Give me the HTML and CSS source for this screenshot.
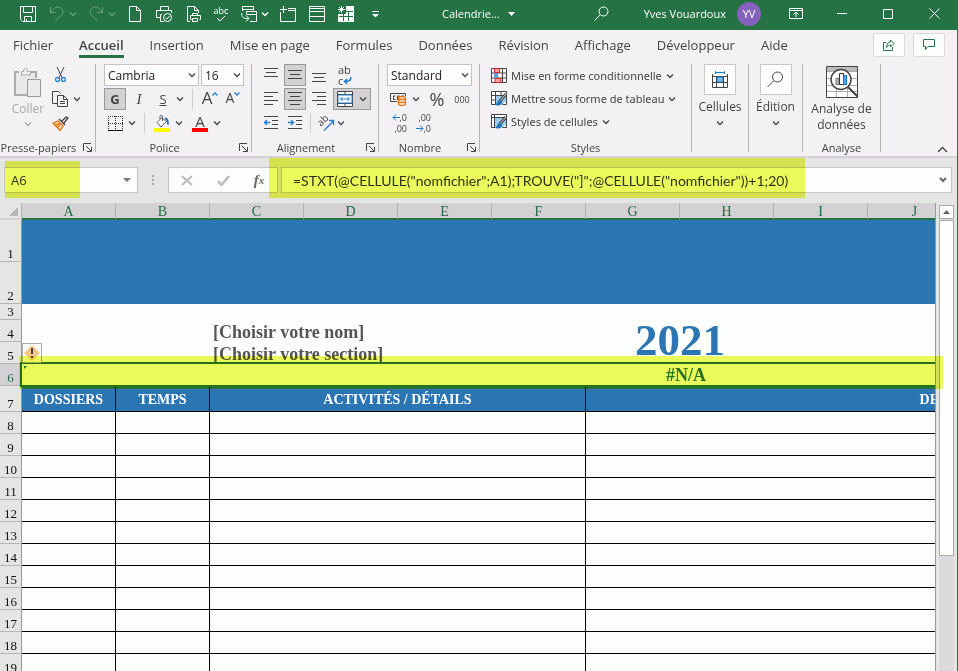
FILE: index.html
```html
<!DOCTYPE html>
<html lang="fr">
<head>
  <meta charset="UTF-8" />
  <meta name="viewport" content="width=device-width, initial-scale=1.0"/>
  <title>Calendrier</title>
  <link rel="stylesheet" href="styles.css">
</head>
<body>
  <svg class="defs" aria-hidden="true">
    <symbol id="chev" viewBox="0 0 8 8"><path d="M1 2.500l3 3 3-3" fill="none" stroke="currentColor" stroke-width="1.300"/></symbol>
    <symbol id="launch" viewBox="0 0 9 9"><path d="M.5 8V.5H8M3 3l5 5M8.500 4v4.500H4" fill="none" stroke="#444"/></symbol>
  </svg>

  <header class="titlebar">
    <div class="quick">
      <button aria-label="Enregistrer"><svg width="16" height="16"><path d="M.5.500h15v15h-13l-2-2zM3.500.500v6h9v-6M4.500 15.500v-5h7v5M6.500 13v2.500"/></svg></button>
      <button class="dim" aria-label="Annuler"><svg width="16" height="16"><path d="M1.500 1v5.500H7M1.500 6.500C5 1 9 0 12 2c3 2.500 2 5.500 0 7.500l-6 6"/></svg></button>
      <button class="dim more" aria-label="Options d'annulation"><svg width="8" height="8"><use href="#chev"/></svg></button>
      <button class="dim" aria-label="Rétablir"><svg width="16" height="16"><path d="M14.500 1v5.500H9M14.500 6.500C11 1 7 0 4 2c-3 2.500-2 5.500 0 7.500l6 6"/></svg></button>
      <button class="dim more" aria-label="Options de rétablissement"><svg width="8" height="8"><use href="#chev"/></svg></button>
      <button aria-label="Nouveau"><svg width="16" height="16"><path d="M2.500.500h7l4 4v11h-11zM9.500.500v4h4"/></svg></button>
      <button aria-label="Impression rapide"><svg width="16" height="16"><path d="M4.500 4.500v-4h8v4M4 11.500H.5v-7h15V7M6 8.500H4.500v7H8"/><circle cx="11.500" cy="11.500" r="4"/><path d="M9.500 11.500l1.500 1.500 2.500-3"/></svg></button>
      <button aria-label="Aperçu avant impression"><svg width="16" height="16"><path d="M5 15.500H2.500V.5h7l4 4V7M9.500.500v4h4M7.500 9.500v-2h5v2M6.500 13.500h-1v-4h10v4h-1M7.500 12.500h5v3h-5z"/></svg></button>
      <button class="abc" aria-label="Orthographe">abc<svg width="10" height="6"><path d="M1 2l3 3 5-5"/></svg></button>
      <button aria-label="Calculer"><svg width="16" height="16"><path d="M1.500 5V.5h11v4M1.500 3.500h11M9 15.500h6.500v-10h-10V8M5.500 8.500h10M1 7C0 11 3 13 7.500 12.500M5 9.500l3 3-3 3"/></svg></button>
      <button class="more" aria-label="Options de calcul"><svg width="8" height="8"><use href="#chev"/></svg></button>
      <button aria-label="Insérer"><svg width="16" height="16"><path d="M8 2.500h7.500v13H.5V6M8 4.500h7.500M3.500 0v7M0 3.500h7"/></svg></button>
      <button aria-label="Lignes"><svg width="16" height="16"><path d="M.5.500h15v15H.5zM.5 5.500h15M.5 10.500h15M.5 2.500h15"/></svg></button>
      <button aria-label="Figer les volets"><svg width="16" height="16"><path d="M8 0h8v16H0V8h8z" fill="#fff" stroke="none"/><path d="M3.500 0v7M0 3.500h7M1 1l5 5M6 1L1 6"/><path d="M5.500 6v9M10.500 5v10M5 5.500h10M1 10.500h14" stroke="#257345"/></svg></button>
      <button aria-label="Personnaliser"><svg width="16" height="16"><path d="M5 5.500h7"/><path d="M5 8h7l-3.500 3.500z" fill="#fff" stroke="none"/></svg></button>
    </div>
    <button class="filename">Calendrie...<svg width="7" height="4"><path d="M0 0h7L3.500 4z" fill="#fff" stroke="none"/></svg></button>
    <button class="search" aria-label="Rechercher"><svg width="15" height="15"><circle cx="9.500" cy="5.500" r="4.500"/><path d="M6 9l-5.500 5.500"/></svg></button>
    <span class="user">Yves Vouardoux</span>
    <span class="avatar">YV</span>
    <div class="window">
      <button aria-label="Options du ruban"><svg width="14" height="11"><path d="M.5.500h13v10H.5zM.5 2.500h13M7 9V4M4.500 6.500L7 4l2.500 2.500"/></svg></button>
      <button aria-label="Réduire"><svg width="11" height="11"><path d="M0 5.500h10"/></svg></button>
      <button aria-label="Agrandir"><svg width="10" height="10"><path d="M.5.500h9v9h-9z"/></svg></button>
      <button aria-label="Fermer"><svg width="11" height="11"><path d="M.5.500l10 10M10.500.500l-10 10"/></svg></button>
    </div>
  </header>

  <nav class="tabs">
    <a href="#">Fichier</a>
    <a href="#" class="active">Accueil</a>
    <a href="#">Insertion</a>
    <a href="#">Mise en page</a>
    <a href="#">Formules</a>
    <a href="#">Données</a>
    <a href="#">Révision</a>
    <a href="#">Affichage</a>
    <a href="#">Développeur</a>
    <a href="#">Aide</a>
    <div class="share">
      <button aria-label="Partager"><svg width="12" height="12"><path d="M3 3.500H.5v8h9V8M7.500 1v2C5 3 3.500 5 3.500 8.500 4.500 6.500 6 6 7.500 6v2L11 4.500z"/></svg></button>
      <button aria-label="Commentaires"><svg width="12" height="12"><path d="M.5.500h11v7H5l-2.500 3v-3h-2z"/></svg></button>
    </div>
  </nav>

  <section class="ribbon">
    <div class="group clipboard">
      <div class="cols">
        <button class="paste"><svg width="28" height="30"><path d="M5 4H1v23h12M17 4h5v6" fill="none" stroke="#aaa" stroke-width="2"/><path d="M2 5h19v6h-8v15H2z" fill="#e9e9e9"/><path d="M7.500 7V3.500h2c0-4 4-4 4 0h3V7z" fill="#eee" stroke="#aaa"/><path d="M13.500 11.500h13v17h-13z" fill="#e9ecea" stroke="#999"/></svg>Coller<svg width="8" height="8"><use href="#chev"/></svg></button>
        <div class="rows">
          <div class="row"><button class="tool" aria-label="Couper"><svg width="11" height="16"><path d="M2 0l5 10.500M9 0L4 10.500" fill="none" stroke="#444"/><circle cx="2.500" cy="12.500" r="2" fill="none" stroke="#1e7fd0" stroke-width="1.300"/><circle cx="8.500" cy="12.500" r="2" fill="none" stroke="#1e7fd0" stroke-width="1.300"/></svg></button></div>
          <div class="row"><button class="tool" aria-label="Copier"><svg width="16" height="16"><path d="M5 12.500H.5V.5h6l2 2M5.500 4.500h6l4 4v7h-10zM11.500 4.500v4h4M8 10.500h5M8 12.500h5" fill="none" stroke="#444"/></svg></button><button class="drop" aria-label="Options de copie"><svg width="8" height="8"><use href="#chev"/></svg></button></div>
          <div class="row"><button class="tool" aria-label="Reproduire la mise en forme"><svg width="17" height="15"><path d="M10 5l4-4 2 1-4 5M7 3l6 6" fill="none" stroke="#444" stroke-width="1.400"/><path d="M1 7l5-2 5 5-3 4.500zM3 9l5-1M5 11.500l3-2" fill="#fbd9b5" stroke="#e0761a" stroke-width="1.300"/></svg></button></div>
        </div>
      </div>
      <div class="label">Presse-papiers<svg class="launch" width="9" height="9"><use href="#launch"/></svg></div>
    </div>

    <div class="group font">
      <div class="rows">
        <div class="row two">
          <select class="family" aria-label="Police"><option>Cambria</option></select>
          <select class="size" aria-label="Taille de police"><option>16</option></select>
        </div>
        <div class="row">
          <button class="tool on bold" aria-label="Gras">G</button>
          <button class="tool italic" aria-label="Italique">I</button>
          <button class="tool under" aria-label="Souligné">S</button>
          <button class="drop" aria-label="Styles de soulignement"><svg width="8" height="8"><use href="#chev"/></svg></button>
          <i class="sep"></i>
          <button class="tool big" aria-label="Agrandir la police">A<svg width="6" height="4"><path d="M.5 3.500L3 1l2.500 2.500" fill="none" stroke="#1e7fd0" stroke-width="1.300"/></svg></button>
          <button class="tool mid" aria-label="Réduire la police">A<svg width="6" height="4"><path d="M.5.500L3 3 5.500.500" fill="none" stroke="#1e7fd0" stroke-width="1.300"/></svg></button>
        </div>
        <div class="row">
          <button class="tool" aria-label="Bordures"><svg width="15" height="15"><path d="M0 .5h15M0 7.500h15M.5 0v13M7.500 0v13M14.500 0v13" fill="none" stroke="#333" stroke-dasharray="1 1"/><path d="M0 14.500h15" stroke="#111"/></svg></button>
          <button class="drop" aria-label="Options de bordure"><svg width="8" height="8"><use href="#chev"/></svg></button>
          <i class="sep"></i>
          <button class="tool" aria-label="Remplissage"><svg width="16" height="17"><path d="M3 7.500L8 2.500l4 4-5 5.500zM6 4V1.500C6 0 8.500 0 8.500 1.500V6" fill="#fff" stroke="#555"/><path d="M11 3.500c3 0 3 3 3 6" fill="none" stroke="#1e6fb8" stroke-width="2"/><path d="M0 13h16v4H0z" fill="#ff0"/></svg></button>
          <button class="drop" aria-label="Couleurs de remplissage"><svg width="8" height="8"><use href="#chev"/></svg></button>
          <button class="tool color" aria-label="Couleur de police">A</button>
          <button class="drop" aria-label="Couleurs de police"><svg width="8" height="8"><use href="#chev"/></svg></button>
        </div>
      </div>
      <div class="label">Police<svg class="launch" width="9" height="9"><use href="#launch"/></svg></div>
    </div>

    <div class="group align">
      <div class="rows">
        <div class="row two">
          <button class="tool" aria-label="Aligner en haut"><svg width="14" height="14"><path d="M0 .5h14M2 4.500h10M0 8.500h14"/></svg></button>
          <button class="tool on" aria-label="Aligner au centre"><svg width="14" height="14"><path d="M0 2.500h14M2 6.500h10M0 10.500h14"/></svg></button>
          <button class="tool" aria-label="Aligner en bas"><svg width="14" height="14"><path d="M0 5.500h14M2 9.500h10M0 13.500h14"/></svg></button>
          <button class="tool wrap" aria-label="Renvoyer à la ligne"><span>ab</span><span>c<svg width="9" height="8"><path d="M7.500 0c1 3-1 4.500-6 4.500M4 2L1.500 4.500 4 7" fill="none" stroke="#1e7fd0" stroke-width="1.500"/></svg></span></button>
        </div>
        <div class="row two">
          <button class="tool" aria-label="Aligner à gauche"><svg width="14" height="14"><path d="M0 .5h14M0 4.500h9M0 8.500h14M0 12.500h9"/></svg></button>
          <button class="tool on" aria-label="Centrer"><svg width="14" height="14"><path d="M0 .5h14M2 4.500h10M0 8.500h14M2 12.500h10"/></svg></button>
          <button class="tool" aria-label="Aligner à droite"><svg width="14" height="14"><path d="M0 .5h14M5 4.500h9M0 8.500h14M5 12.500h9"/></svg></button>
          <button class="merge on" aria-label="Fusionner et centrer"><svg width="16" height="16"><path d="M.5.500h15v15H.5z" fill="#fff" stroke="#444"/><path d="M0 3.500h16M0 12.500h16M8 0v3M8 13v3" stroke="#444"/><path d="M1 4h14v8H1z" fill="#fff" stroke="#1e7fd0"/><path d="M3.500 8h9M5.500 6l-2 2 2 2M10.500 6l2 2-2 2" stroke="#1e7fd0"/></svg><svg width="8" height="8"><use href="#chev"/></svg></button>
        </div>
        <div class="row two">
          <button class="tool" aria-label="Diminuer le retrait"><svg width="14" height="14"><path d="M0 .5h14M8 4.500h6M8 8.500h6M0 12.500h14"/><path d="M.5 6.500H6M3 4L.5 6.500 3 9" stroke="#1e7fd0" stroke-width="1.300"/></svg></button>
          <button class="tool" aria-label="Augmenter le retrait"><svg width="14" height="14"><path d="M0 .5h14M8 4.500h6M8 8.500h6M0 12.500h14"/><path d="M0 6.500h5.500M3 4l2.500 2.500L3 9" stroke="#1e7fd0" stroke-width="1.300"/></svg></button>
          <i class="sep short"></i>
          <button class="tool" aria-label="Orientation"><svg width="18" height="18"><text x="4" y="13" transform="rotate(-45 4 13)" class="tilt">ab</text><path d="M7 16.500L16.500 7M12 6.500h4.500V11" stroke="#1e7fd0" stroke-width="1.300"/></svg></button>
          <button class="drop near" aria-label="Options d'orientation"><svg width="8" height="8"><use href="#chev"/></svg></button>
        </div>
      </div>
      <div class="label">Alignement<svg class="launch" width="9" height="9"><use href="#launch"/></svg></div>
    </div>

    <div class="group number">
      <div class="rows">
        <div class="row"><select class="format" aria-label="Format de nombre"><option>Standard</option></select></div>
        <div class="row">
          <button class="tool" aria-label="Format comptabilité"><svg width="17" height="14"><path d="M7 9.500H.5v-8h15V4" fill="none" stroke="#444"/><path d="M5.500 4H3.500v3.500h2M7.500 8V4h2v2h-2M11.500 6V4H14" fill="none" stroke="#444"/><path d="M8.500 6v6c0 2 7 2 7 0V6c0-2-7-2-7 0zM8.500 6c0 2 7 2 7 0M8.500 9c0 2 7 2 7 0" fill="#fbe3cc" stroke="#e0761a" stroke-width="1.300"/></svg></button>
          <button class="drop wide" aria-label="Autres devises"><svg width="8" height="8"><use href="#chev"/></svg></button>
          <button class="tool percent" aria-label="Pourcentage">%</button>
          <button class="tool zeros" aria-label="Milliers">000</button>
        </div>
        <div class="row two">
          <button class="tool dec" aria-label="Ajouter une décimale"><span><svg width="8" height="7"><path d="M8 3.500H1M4 .5l-3 3 3 3"/></svg>,0</span><span>,00</span></button>
          <button class="tool dec" aria-label="Réduire les décimales"><span>,00</span><span><svg width="8" height="7"><path d="M0 3.500h7M4 .5l3 3-3 3"/></svg>,0</span></button>
        </div>
      </div>
      <div class="label">Nombre<svg class="launch" width="9" height="9"><use href="#launch"/></svg></div>
    </div>

    <div class="group styles">
      <div class="list">
        <button><svg width="16" height="15"><path d="M.5.500h15v14H.5zM0 5h16M0 10h16M11.500 0v15" fill="#fff" stroke="#444"/><path d="M3.500.500h5v4h-5zM4 10.500h6v4H4z" fill="#f7a1a1" stroke="#d22"/><path d="M3 5h4v5H3z" fill="#5aa0dd"/></svg>Mise en forme conditionnelle<svg width="8" height="8"><use href="#chev"/></svg></button>
        <button><svg width="16" height="15"><path d="M.5.500h15v13H.5zM0 4.500h16M0 9h16M4.500 0v14M10 0v5" fill="#fff" stroke="#444"/><path d="M5 5h10v5l-4 4H5z" fill="#9accf0"/><path d="M15 3L9 10" stroke="#444" stroke-width="3"/><path d="M15 3L9 10" stroke="#ddd"/><path d="M9 9c-3 0-2 3-5 5 4 1 7 0 7-3z" fill="#1e6fb8"/></svg>Mettre sous forme de tableau<svg width="8" height="8"><use href="#chev"/></svg></button>
        <button><svg width="16" height="15"><path d="M.5.500h15v13H.5zM0 3.500h16M3.500 0v14" fill="#fff" stroke="#444"/><path d="M4 4h11v6l-4 4H4z" fill="#9accf0"/><path d="M15 3L9 10" stroke="#444" stroke-width="3"/><path d="M15 3L9 10" stroke="#ddd"/><path d="M9 9c-3 0-2 3-5 5 4 1 7 0 7-3z" fill="#1e6fb8"/></svg>Styles de cellules<svg width="8" height="8"><use href="#chev"/></svg></button>
      </div>
      <div class="label">Styles</div>
    </div>

    <div class="group cells">
      <button class="tall"><span class="frame"><svg width="16" height="17"><path d="M.5 3v13.500h15V3M.5 5.500h15M.5 11.500h15M4.500 5v11M11.500 5v11" fill="none" stroke="#444"/><path d="M5 6h6v5H5z" fill="#7fbdf0" stroke="#1e6fb8"/><path d="M3 1.500h10M3.500 0v3M12.500 0v3" stroke="#1e7fd0"/></svg></span>Cellules<svg width="8" height="8"><use href="#chev"/></svg></button>
    </div>

    <div class="group edit">
      <button class="tall"><span class="frame"><svg width="17" height="17"><circle cx="10.500" cy="6" r="5" fill="none" stroke="#444"/><path d="M7 9.500l-6.500 6.500" stroke="#444"/></svg></span>Édition<svg width="8" height="8"><use href="#chev"/></svg></button>
    </div>

    <div class="group analysis">
      <button class="tall"><svg class="lens" width="32" height="32"><path d="M.5.500h31v31H.5z" fill="#fff" stroke="#444"/><path d="M1 1h30v4H1z" fill="#bbb"/><path d="M1 5.500h30M1 12.500h30M1 19.500h30M1 25.500h30M6.500 13v6M10.500 5v7M21.500 5v7M10.500 20v11M21.500 20v11" stroke="#aaa"/><circle cx="15" cy="13.500" r="10" fill="#fff" stroke="#444" stroke-width="1.500"/><path d="M10 12.500h3v6h-3z" fill="#bbb" stroke="#777"/><path d="M13.500 7.500h4v11h-4z" fill="#fff" stroke="#333"/><path d="M17.500 9.500h3v9h-3z" fill="#5aa5e6" stroke="#1e6fb8"/><path d="M22 21l10 10" stroke="#444" stroke-width="2"/></svg>Analyse de<br>données</button>
      <div class="label">Analyse</div>
    </div>
    <button class="collapse" aria-label="Réduire le ruban"><svg width="11" height="7"><path d="M1 6l4.500-4.500L10 6" fill="none" stroke="#444" stroke-width="1.400"/></svg></button>
  </section>

  <section class="formulabar">
    <div class="namebox">
      <input type="text" value="A6" aria-label="Zone Nom">
      <button aria-label="Liste des noms"><svg width="8" height="4"><path d="M0 0h8L4 4z" fill="#777"/></svg></button>
    </div>
    <svg class="grip" width="2" height="10"><path d="M0 0h2v2H0zM0 4h2v2H0zM0 8h2v2H0z" fill="#aaa"/></svg>
    <div class="fx">
      <button aria-label="Annuler la saisie"><svg width="12" height="11"><path d="M1 1l10 9M11 1L1 10" stroke="#bbb" stroke-width="2"/></svg></button>
      <button aria-label="Valider la saisie"><svg width="13" height="11"><path d="M1 6l3.500 4L12 1" fill="none" stroke="#bbb" stroke-width="2.500"/></svg></button>
      <button class="fn" aria-label="Insérer une fonction">f<sub>x</sub></button>
    </div>
    <div class="formula">
      <input type="text" value='=STXT(@CELLULE("nomfichier";A1);TROUVE("]";@CELLULE("nomfichier"))+1;20)' aria-label="Barre de formule">
      <button aria-label="Développer la barre"><svg width="8" height="6"><path d="M1 1l3 3 3-3" fill="none" stroke="#666" stroke-width="2"/></svg></button>
    </div>
    <i class="marker name-marker"></i>
    <i class="marker formula-marker"></i>
  </section>

  <main class="sheet">
    <div class="grid">
      <table>
        <colgroup><col class="num"><col span="10"></colgroup>
        <thead>
          <tr><th class="corner"><svg width="9" height="9"><path d="M9 0v9H0z" fill="#b5b5b5"/></svg></th><th>A</th><th>B</th><th>C</th><th>D</th><th>E</th><th>F</th><th>G</th><th>H</th><th>I</th><th>J</th></tr>
        </thead>
        <tbody>
          <tr class="banner"><th>1</th><td colspan="10"></td></tr>
          <tr class="banner"><th>2</th><td colspan="10"></td></tr>
          <tr class="thin"><th>3</th><td colspan="10"></td></tr>
          <tr><th>4</th><td colspan="2"></td><td colspan="4" class="who">[Choisir votre nom]</td><td colspan="2" rowspan="2" class="year">2021</td><td colspan="2"></td></tr>
          <tr><th>5</th><td colspan="2"></td><td colspan="4" class="who">[Choisir votre section]</td><td colspan="2"></td></tr>
          <tr class="current"><th>6</th><td colspan="6"><svg width="5" height="5"><path d="M2 2h3L2 5z" fill="#1b7a1b"/></svg></td><td colspan="2" class="error">#N/A</td><td colspan="2"></td></tr>
          <tr class="head"><th>7</th><td>DOSSIERS</td><td>TEMPS</td><td colspan="4">ACTIVITÉS / DÉTAILS</td><td colspan="4" class="last">DE</td></tr>
          <tr class="line"><th>8</th><td></td><td></td><td colspan="4"></td><td colspan="4"></td></tr>
          <tr class="line"><th>9</th><td></td><td></td><td colspan="4"></td><td colspan="4"></td></tr>
          <tr class="line"><th>10</th><td></td><td></td><td colspan="4"></td><td colspan="4"></td></tr>
          <tr class="line"><th>11</th><td></td><td></td><td colspan="4"></td><td colspan="4"></td></tr>
          <tr class="line"><th>12</th><td></td><td></td><td colspan="4"></td><td colspan="4"></td></tr>
          <tr class="line"><th>13</th><td></td><td></td><td colspan="4"></td><td colspan="4"></td></tr>
          <tr class="line"><th>14</th><td></td><td></td><td colspan="4"></td><td colspan="4"></td></tr>
          <tr class="line"><th>15</th><td></td><td></td><td colspan="4"></td><td colspan="4"></td></tr>
          <tr class="line"><th>16</th><td></td><td></td><td colspan="4"></td><td colspan="4"></td></tr>
          <tr class="line"><th>17</th><td></td><td></td><td colspan="4"></td><td colspan="4"></td></tr>
          <tr class="line"><th>18</th><td></td><td></td><td colspan="4"></td><td colspan="4"></td></tr>
          <tr class="line"><th>19</th><td></td><td></td><td colspan="4"></td><td colspan="4"></td></tr>
        </tbody>
      </table>
      <div class="selection"></div>
      <button class="warning" aria-label="Erreur"><svg width="18" height="18"><path d="M9 1l8 8-8 8-8-8z" fill="#f5c48a"/><path d="M8 4h2v6H8zM8 12h2v2H8z" fill="#444"/></svg></button>
    </div>
    <div class="scroll">
      <button aria-label="Défiler vers le haut"><svg width="7" height="4"><path d="M0 4h7L3.500 0z" fill="#666"/></svg></button>
      <div class="thumb"></div>
    </div>
    <i class="marker row-marker"></i>
  </main>
</body>
</html>
```
FILE: styles.css
```css
* {
  box-sizing: border-box;
}
body {
  margin: 0;
  height: 100vh;
  overflow: hidden;
  display: flex;
  flex-direction: column;
  border-right: 1px solid #257345;
  background: #e4e6e4;
  font-family: "Open Sans", "Noto Sans", sans-serif;
  font-size: 12px;
  color: #444;
}
button {
  padding: 0;
  border: none;
  background: none;
  font: inherit;
  color: inherit;
  display: flex;
  align-items: center;
  justify-content: center;
}
svg {
  display: block;
  flex: none;
}
.defs {
  position: absolute;
  width: 0;
  height: 0;
}

/* title bar */
.titlebar {
  flex: none;
  height: 30px;
  display: flex;
  align-items: center;
  padding-bottom: 3px;
  background: #257345;
  color: #fff;
  font-size: 11px;
}
.titlebar svg {
  fill: none;
  stroke: #fff;
}
.quick {
  display: flex;
  align-items: center;
  gap: 13px;
  padding-left: 20px;
}
.quick .more {
  margin: 0 -2px 0 -9px;
}
.quick .dim {
  opacity: 0.3;
}
.quick .abc {
  width: 14px;
  flex-direction: column;
  font-size: 9px;
  line-height: 10px;
}
.filename {
  gap: 8px;
  margin-left: 59px;
}
.search {
  margin-left: auto;
}
.user {
  margin: 0 11px 0 35px;
}
.avatar {
  width: 24px;
  height: 24px;
  border-radius: 50%;
  background: #8661bd;
  line-height: 24px;
  text-align: center;
}
.window {
  display: flex;
  margin-left: 12px;
}
.window button {
  width: 46px;
  height: 27px;
}

/* tabs */
.tabs {
  flex: none;
  height: 34px;
  display: flex;
  align-items: flex-start;
  gap: 26px;
  padding: 3px 12px 0 13px;
  background: #f4f1f5;
  font-size: 13px;
}
.tabs a {
  height: 25px;
  line-height: 24px;
  color: #444;
  text-decoration: none;
  white-space: nowrap;
}
.tabs .active {
  font-weight: 600;
  border-bottom: 3px solid #257345;
}
.share {
  display: flex;
  gap: 8px;
  margin-left: auto;
}
.share button {
  width: 32px;
  height: 24px;
  border: 1px solid #dddadd;
  border-radius: 2px;
  background: #fcfefc;
}
.share svg {
  fill: none;
  stroke: #257345;
}

/* ribbon */
.ribbon {
  flex: none;
  height: 94px;
  display: flex;
  align-items: flex-start;
  background: #f4f1f5;
  border-bottom: 2px solid #d3d1d3;
}
.group {
  flex: none;
  height: 88px;
  display: flex;
  flex-direction: column;
  justify-content: space-between;
  border-right: 1px solid #b8b4b0;
  position: relative;
}
.clipboard { width: 96px; }
.font { width: 156px; }
.align { width: 127px; }
.number { width: 101px; }
.styles { width: 212px; }
.cells { width: 57px; }
.edit { width: 54px; }
.analysis { width: 78px; }
.font .rows,
.align .rows,
.number .rows {
  padding-left: 8px;
}
.label {
  height: 8px;
  line-height: 8px;
  font-size: 11px;
  text-align: center;
  padding-right: 18px;
}
.styles .label,
.analysis .label {
  padding-right: 0;
}
.launch {
  position: absolute;
  right: 3px;
  bottom: 0;
}
.rows {
  display: flex;
  flex-direction: column;
  gap: 2px;
}
.row {
  height: 22px;
  display: flex;
  align-items: center;
}
.two {
  gap: 2px;
}
.cols {
  display: flex;
  gap: 1px;
}
.paste {
  width: 48px;
  padding: 4px 0 0 8px;
  flex-direction: column;
  justify-content: flex-start;
  color: #aaa;
  gap: 3px;
  line-height: 16px;
}
.tool {
  width: 22px;
  height: 22px;
  flex: none;
}
.drop {
  width: 12px;
  height: 22px;
}
.on {
  background: #d3d1d4;
  border: 1px solid #999;
}
.sep {
  width: 1px;
  height: 20px;
  margin: 0 6px;
  background: #ccc;
}
select {
  appearance: none;
  height: 22px;
  padding: 0 3px;
  border: 1px solid #c5c1c5;
  border-radius: 0;
  background: #fcfefc url("data:image/svg+xml,%3Csvg xmlns='http://www.w3.org/2000/svg' width='8' height='8'%3E%3Cpath d='M1 2.500l3 3 3-3' fill='none' stroke='%23444' stroke-width='1.300'/%3E%3C/svg%3E") no-repeat right 2px center;
  font: inherit;
  color: #222;
}
.family { width: 95px; }
.size { width: 43px; }
.format { width: 85px; }
.bold {
  font-weight: 700;
  font-size: 13px;
}
.italic {
  width: 26px;
  font-family: "Liberation Serif", serif;
  font-style: italic;
  font-size: 15px;
}
.under {
  text-decoration: underline;
  font-size: 13px;
}
.big,
.mid {
  align-items: flex-start;
  font-size: 17px;
  line-height: 20px;
}
.big svg,
.mid svg {
  margin-top: 4px;
}
.mid {
  width: 24px;
  font-size: 14px;
}
.color {
  width: 16px;
  height: 17px;
  margin: 0 3px 0 7px;
  border-bottom: 4px solid #f00;
  font-size: 15px;
  line-height: 13px;
}
.align svg {
  fill: none;
  stroke: #444;
}
.wrap,
.dec {
  flex-direction: column;
  line-height: 11px;
}
.align .wrap {
  width: 24px;
  align-items: flex-start;
  padding-left: 6px;
  font-size: 11px;
}
.wrap span,
.dec span {
  display: flex;
  align-items: center;
}
.merge {
  width: 38px;
  height: 22px;
  gap: 6px;
  margin-left: 1px;
}
.short {
  margin: 0 2px;
}
.near {
  margin-left: -4px;
}
.align .tilt {
  font-size: 10px;
  fill: #444;
  stroke: none;
}
.wide {
  width: 14px;
}
.percent {
  width: 28px;
  font-size: 18px;
}
.zeros {
  font-size: 9px;
}
.dec {
  align-items: flex-end;
  padding-right: 2px;
  font-size: 9px;
}
.dec svg {
  fill: none;
  stroke: #1e7fd0;
}
.list {
  padding-left: 11px;
  font-family: "Noto Sans", sans-serif;
  font-size: 11px;
}
.list button {
  height: 23px;
  gap: 4px;
}
.tall {
  flex-direction: column;
  line-height: 16px;
  gap: 4px;
}
.frame {
  width: 32px;
  height: 31px;
  border: 1px solid #ccc8c8;
  background: #fcfefc;
  display: flex;
  align-items: center;
  justify-content: center;
}
.analysis .tall {
  display: block;
  text-align: center;
}
.lens {
  margin: 2px auto 3px;
}
.collapse {
  margin: 82px 9px 0 auto;
}

/* formula bar */
.formulabar {
  flex: none;
  height: 45px;
  display: flex;
  align-items: flex-start;
  padding: 9px 5px 0 4px;
  position: relative;
}
.namebox,
.fx,
.formula {
  height: 26px;
  display: flex;
  align-items: center;
  border: 1px solid #c4c4c4;
  background: #fcfefc;
}
.namebox {
  width: 134px;
  padding-right: 6px;
}
.formulabar input {
  flex: 1;
  min-width: 0;
  padding: 0 0 0 6px;
  border: none;
  background: none;
  font: inherit;
  font-size: 13px;
  color: #333;
}
.grip {
  margin: 8px 14px 0;
}
.fx {
  width: 110px;
  margin-right: 3px;
}
.fx button {
  width: 36px;
}
.fx .fn {
  font: italic 700 15px "Liberation Serif", serif;
  color: #666;
}
.fn sub {
  font-size: 11px;
}
.formula {
  flex: 1;
  padding-right: 4px;
}
.formula input {
  padding-left: 11px;
  font-family: Lato, "Noto Sans", sans-serif;
  font-size: 14px;
}
.marker {
  position: absolute;
  background: #edfb5c;
  mix-blend-mode: multiply;
  pointer-events: none;
}
.name-marker {
  left: 5px;
  top: 3px;
  width: 75px;
  height: 37px;
}
.formula-marker {
  left: 269px;
  top: 0;
  width: 536px;
  height: 40px;
}

/* sheet */
.sheet {
  flex: 1;
  min-height: 0;
  display: flex;
  position: relative;
}
.grid {
  flex: 1;
  min-width: 0;
  overflow: hidden;
  position: relative;
  background: #fcfefc;
}
table {
  width: 962px;
  table-layout: fixed;
  border-collapse: separate;
  border-spacing: 0;
  font-family: "Liberation Serif", serif;
}
.num {
  width: 22px;
}
th,
td {
  padding: 0;
  height: 22px;
  line-height: 20px;
}
thead th {
  height: 17px;
  padding-top: 2px;
  border-right: 1px solid #b0b0b0;
  border-bottom: 2px solid #257345;
  background: #d3d1d3;
  color: #1f6b45;
  font-weight: 400;
  font-size: 14px;
  line-height: 13px;
}
thead .corner {
  background: #e4e6e4;
  border-bottom-color: #d3d1d3;
}
.corner svg {
  margin: 0 3px 0 auto;
}
tbody th {
  border-right: 1px solid #999;
  border-bottom: 1px solid #b5b5b5;
  background: #e4e6e4;
  color: #111;
  font-weight: 400;
  font-size: 13px;
  line-height: 15px;
  vertical-align: bottom;
}
tbody .thin th,
.thin td {
  height: 16px;
}
.banner th,
.banner td {
  height: 42px;
}
.banner td,
.head td {
  background: #2b75b3;
}
.who {
  padding: 2px 0 0 3px;
  font-weight: 700;
  font-size: 18px;
  color: #555;
}
.year {
  padding-bottom: 4px;
  font-weight: 700;
  font-size: 45px;
  line-height: 40px;
  text-align: center;
  color: #2b75b3;
}
.current th {
  background: #d3d1d3;
  color: #1f6b45;
}
.current td {
  vertical-align: top;
}
.current .error {
  padding-left: 12px;
  font-weight: 700;
  font-size: 18px;
  line-height: 22px;
  text-align: center;
  color: #2b7560;
}
.head th,
.head td {
  height: 26px;
}
.head td {
  padding-top: 2px;
  border-right: 1px solid #000;
  border-bottom: 1px solid #000;
  color: #fff;
  font-weight: 700;
  font-size: 14px;
  text-align: center;
}
.head .last {
  padding-right: 22px;
  text-align: right;
}
.line td {
  border-right: 1px solid #000;
  border-bottom: 1px solid #000;
}
.selection {
  position: absolute;
  left: 20px;
  top: 159px;
  right: -4px;
  height: 25px;
  border: 2px solid #257345;
}
.warning {
  position: absolute;
  left: 22px;
  top: 140px;
  width: 20px;
  height: 20px;
  border: 1px solid #aaa;
  background: #fcfefc;
}
.scroll {
  flex: none;
  width: 22px;
  padding: 2px 3px 0;
  border-left: 1px solid #999;
  display: flex;
  flex-direction: column;
  background: linear-gradient(#dddadd, #dddadd) no-repeat 3px 2px / 15px 100%;
}
.scroll button {
  width: 15px;
  height: 14px;
  border: 1px solid #aaa;
  background: #fcfefc;
}
.thumb {
  width: 15px;
  height: 72%;
  margin-top: 1px;
  border: 1px solid #aaa;
  background: #fcfefc;
}
.row-marker {
  left: 19px;
  right: 14px;
  top: 153px;
  height: 33px;
}
```
